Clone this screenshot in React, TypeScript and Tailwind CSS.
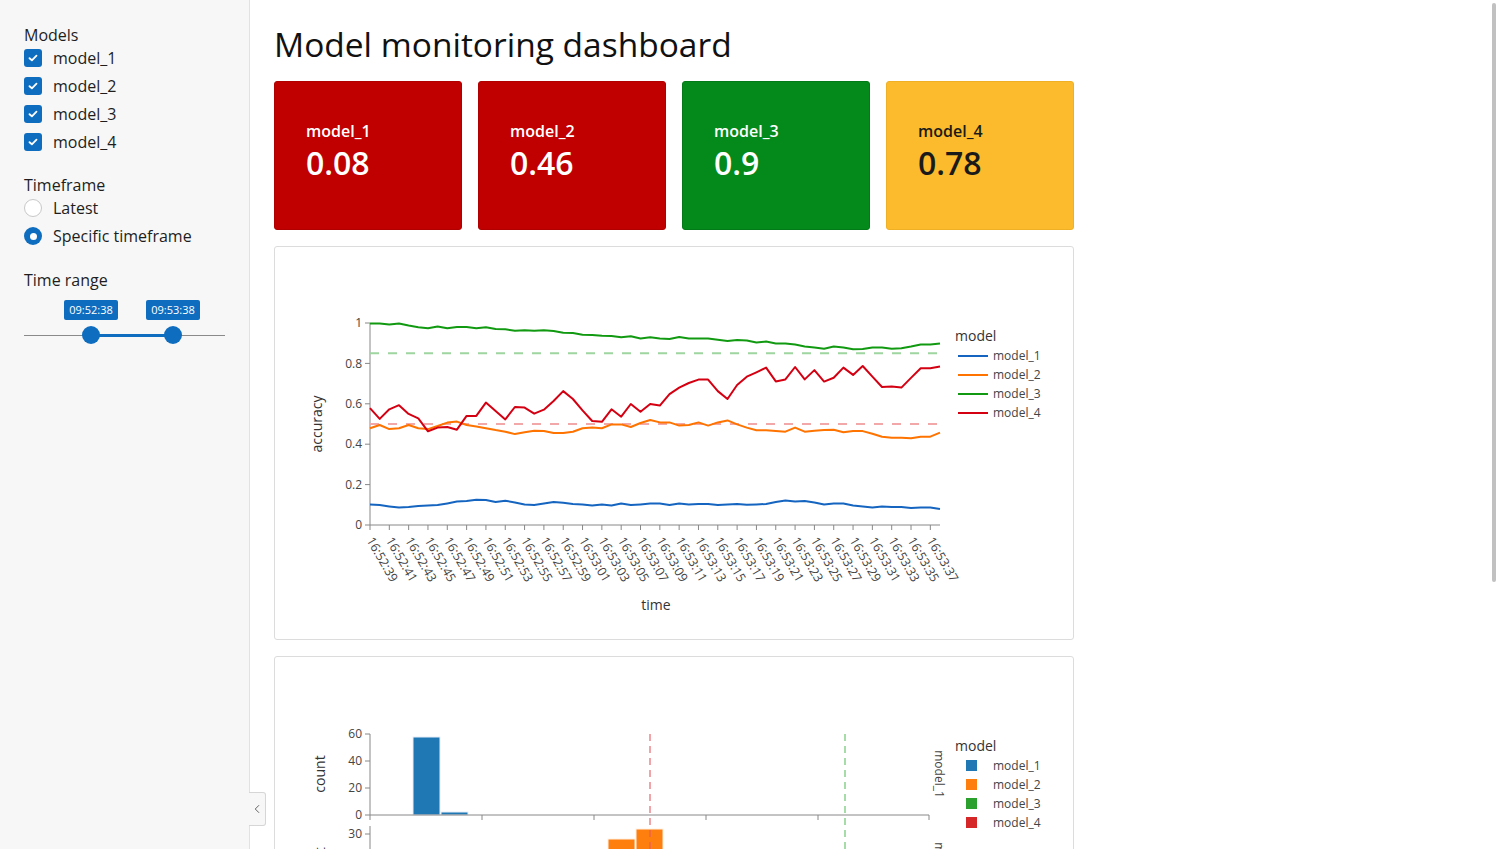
import { ChevronLeft } from 'lucide-react'

const blue = [
  0.102, 0.099, 0.092, 0.086, 0.089, 0.094, 0.096, 0.099, 0.107, 0.116, 0.119, 0.125, 0.124, 0.114, 0.12, 0.112, 0.102, 0.099, 0.107, 0.114,
  0.11, 0.104, 0.102, 0.096, 0.102, 0.096, 0.106, 0.099, 0.102, 0.106, 0.106, 0.099, 0.107, 0.102, 0.104, 0.104, 0.099, 0.102, 0.104, 0.1,
  0.102, 0.104, 0.114, 0.122, 0.117, 0.119, 0.112, 0.102, 0.107, 0.107, 0.097, 0.092, 0.087, 0.092, 0.089, 0.089, 0.084, 0.087, 0.087, 0.079,
]
const orange = [
  0.479, 0.495, 0.475, 0.479, 0.495, 0.479, 0.475, 0.49, 0.507, 0.512, 0.495, 0.487, 0.479, 0.47, 0.462, 0.45, 0.459, 0.467, 0.466, 0.455,
  0.455, 0.462, 0.479, 0.482, 0.479, 0.498, 0.498, 0.485, 0.505, 0.52, 0.508, 0.508, 0.492, 0.495, 0.508, 0.492, 0.508, 0.518, 0.498, 0.482,
  0.469, 0.469, 0.465, 0.462, 0.482, 0.462, 0.467, 0.47, 0.472, 0.459, 0.465, 0.465, 0.452, 0.437, 0.432, 0.432, 0.429, 0.437, 0.437, 0.457,
]
const green = [
  0.998, 0.998, 0.993, 0.997, 0.987, 0.979, 0.974, 0.983, 0.974, 0.98, 0.98, 0.974, 0.979, 0.97, 0.969, 0.962, 0.964, 0.962, 0.964, 0.96,
  0.952, 0.95, 0.942, 0.941, 0.937, 0.936, 0.929, 0.934, 0.924, 0.929, 0.924, 0.921, 0.931, 0.924, 0.924, 0.924, 0.917, 0.911, 0.916, 0.914,
  0.904, 0.908, 0.899, 0.899, 0.893, 0.884, 0.879, 0.873, 0.883, 0.878, 0.87, 0.871, 0.879, 0.879, 0.873, 0.875, 0.883, 0.893, 0.893, 0.898,
]
const red = [
  0.578, 0.525, 0.573, 0.593, 0.55, 0.528, 0.464, 0.482, 0.485, 0.472, 0.54, 0.54, 0.606, 0.564, 0.523, 0.584, 0.581, 0.551, 0.571, 0.614,
  0.663, 0.624, 0.568, 0.515, 0.511, 0.573, 0.536, 0.599, 0.561, 0.599, 0.591, 0.648, 0.68, 0.703, 0.72, 0.72, 0.663, 0.624, 0.693, 0.734,
  0.756, 0.779, 0.711, 0.721, 0.782, 0.721, 0.767, 0.71, 0.729, 0.779, 0.743, 0.787, 0.734, 0.683, 0.686, 0.68, 0.728, 0.776, 0.776, 0.784,
]

const series = [
  { name: 'model_1', color: '#1565c0', data: blue },
  { name: 'model_2', color: '#ff7300', data: orange },
  { name: 'model_3', color: '#119a11', data: green },
  { name: 'model_4', color: '#d40012', data: red },
]

const histColors = ['#1f77b4', '#ff7f0e', '#2ca02c', '#d62728']

const step = 570 / 59
const px = (i: number) => 370 + i * step
const py = (v: number) => 525 - v * 202

const tickLabels = Array.from({ length: 30 }, (_, k) => {
  const s = 39 + 2 * k
  const m = 52 + Math.floor(s / 60)
  return `16:${m}:${String(s % 60).padStart(2, '0')}`
})

const models = ['model_1', 'model_2', 'model_3', 'model_4']

const scores = [
  { name: 'model_1', value: '0.08', cls: 'bg-[#c00000] border-[#b00000] text-white' },
  { name: 'model_2', value: '0.46', cls: 'bg-[#c00000] border-[#b00000] text-white' },
  { name: 'model_3', value: '0.9', cls: 'bg-[#038a1b] border-[#027a17] text-white' },
  { name: 'model_4', value: '0.78', cls: 'bg-[#fbbb2c] border-[#efb025] text-[#1a1a1a]' },
]

const Checkbox = () => (
  <span className="flex h-[18px] w-[18px] items-center justify-center rounded-[3px] bg-[#0f6dbf]">
    <svg width="10" height="8" viewBox="0 0 10 8">
      <path d="M1.5 4.2 L3.9 6.3 L8.5 1.6" fill="none" stroke="#fff" strokeWidth="1.8" strokeLinecap="round" strokeLinejoin="round" />
    </svg>
  </span>
)

const Radio = ({ checked }: { checked?: boolean }) =>
  checked ? (
    <span className="flex h-[18px] w-[18px] items-center justify-center rounded-full bg-[#0f6dbf]">
      <span className="h-[7px] w-[7px] rounded-full bg-white" />
    </span>
  ) : (
    <span className="h-[18px] w-[18px] rounded-full border border-[#c8c8c8] bg-white" />
  )

const Sidebar = () => (
  <aside className="relative w-[250px] shrink-0 border-r border-[#e2e2e2] bg-[#f7f7f7] pl-6 pt-[27px] text-[16px] text-[#1e1e1e]">
    <div className="leading-[17px]">Models</div>
    {models.map((m) => (
      <label key={`cb-${m}`} className="flex h-7 items-center gap-[11px]">
        <Checkbox />
        <span>{m}</span>
      </label>
    ))}

    <div className="mt-5 leading-[18px]">Timeframe</div>
    <label className="flex h-7 items-center gap-[11px]">
      <Radio />
      <span>Latest</span>
    </label>
    <label className="flex h-7 items-center gap-[11px]">
      <Radio checked />
      <span>Specific timeframe</span>
    </label>

    <div className="mt-5 leading-[20px]">Time range</div>

    {/* range slider */}
    <div className="relative mt-[10px] h-[46px] w-[201px]">
      <div className="absolute left-0 right-0 top-[35px] h-px bg-[#8a8a8a]" />
      <div className="absolute left-[67px] top-[34px] h-[3px] w-[82px] bg-[#0f6dbf]" />
      <div className="absolute left-[58px] top-[26px] h-[18px] w-[18px] rounded-full bg-[#0f6dbf]" />
      <div className="absolute left-[140px] top-[26px] h-[18px] w-[18px] rounded-full bg-[#0f6dbf]" />
      <div className="absolute left-[40px] top-0 flex h-5 w-[54px] items-center justify-center rounded-[2px] bg-[#0f6dbf] text-[11px] text-white">
        09:52:38
      </div>
      <div className="absolute left-[122px] top-0 flex h-5 w-[54px] items-center justify-center rounded-[2px] bg-[#0f6dbf] text-[11px] text-white">
        09:53:38
      </div>
    </div>

    {/* collapse tab */}
    <button className="absolute left-full top-[792px] flex h-[34px] w-[17px] items-center justify-center rounded-r-[3px] border border-l-0 border-[#d6d6d6] bg-[#f7f7f7] text-[#333]">
      <ChevronLeft size={14} strokeWidth={1.3} />
    </button>
  </aside>
)

const LineChart = () => (
  <svg width="798" height="392" className="block" fontFamily="'Open Sans', sans-serif">
    <g transform="translate(-275 -247)">
      {/* y axis */}
      <line x1="370" y1="323" x2="370" y2="525" stroke="#888" />
      {[0, 0.2, 0.4, 0.6, 0.8, 1].map((v) => (
        <g key={`yt-${v}`}>
          <line x1="365" y1={py(v)} x2="370" y2={py(v)} stroke="#888" />
          <text x="362" y={py(v)} dy="0.35em" textAnchor="end" fontSize="12" fill="#444">
            {v}
          </text>
        </g>
      ))}
      <text transform="translate(322 424) rotate(-90)" textAnchor="middle" fontSize="14" fill="#333">
        accuracy
      </text>

      {/* x axis */}
      <line x1="370" y1="525" x2="940" y2="525" stroke="#888" />
      {tickLabels.map((t, k) => {
        const x = px(2 * k)
        return (
          <g key={`xt-${t}`}>
            <line x1={x} y1="525" x2={x} y2="530" stroke="#888" />
            <text transform={`translate(${x} 538) rotate(60)`} dy="0.35em" fontSize="12.5" fill="#444">
              {t}
            </text>
          </g>
        )
      })}
      <text x="656" y="610" textAnchor="middle" fontSize="14" fill="#333">
        time
      </text>

      {/* thresholds */}
      <line x1="370" y1={py(0.85)} x2="940" y2={py(0.85)} stroke="#9fd5a1" strokeWidth="2" strokeDasharray="9 9" />
      <line x1="370" y1={py(0.5)} x2="940" y2={py(0.5)} stroke="#f2a7a9" strokeWidth="2" strokeDasharray="9 9" />

      {series.map((s) => (
        <polyline
          key={`line-${s.name}`}
          points={s.data.map((v, i) => `${px(i).toFixed(1)},${py(v).toFixed(1)}`).join(' ')}
          fill="none"
          stroke={s.color}
          strokeWidth="2"
          strokeLinejoin="round"
        />
      ))}

      {/* legend */}
      <text x="955" y="341" fontSize="14" fill="#333">
        model
      </text>
      {series.map((s, i) => (
        <g key={`lg-${s.name}`}>
          <line x1="958" y1={356 + i * 19} x2="988" y2={356 + i * 19} stroke={s.color} strokeWidth="2" />
          <text x="993" y={356 + i * 19} dy="0.35em" fontSize="12" fill="#444">
            {s.name}
          </text>
        </g>
      ))}
    </g>
  </svg>
)

const HistChart = () => (
  <svg width="798" height="392" className="block" fontFamily="'Open Sans', sans-serif">
    <g transform="translate(-275 -657)">
      {/* facet 1 */}
      <line x1="370" y1="734" x2="370" y2="815" stroke="#888" />
      {[0, 20, 40, 60].map((v) => (
        <g key={`h1-${v}`}>
          <line x1="365" y1={815 - v * 1.35} x2="370" y2={815 - v * 1.35} stroke="#888" />
          <text x="362" y={815 - v * 1.35} dy="0.35em" textAnchor="end" fontSize="12" fill="#444">
            {v}
          </text>
        </g>
      ))}
      <text transform="translate(325 774) rotate(-90)" textAnchor="middle" fontSize="14" fill="#333">
        count
      </text>
      <rect x="413" y="737" width="27" height="78" fill="#1f77b4" stroke="#e8f0f7" strokeWidth="1" />
      <rect x="441" y="812" width="27" height="3" fill="#1f77b4" stroke="#e8f0f7" strokeWidth="1" />
      <line x1="370" y1="815" x2="929" y2="815" stroke="#888" />
      {[370, 482, 594, 706, 818, 929].map((x) => (
        <line key={`hx-${x}`} x1={x} y1="815" x2={x} y2="820" stroke="#888" />
      ))}
      <text transform="translate(935 774) rotate(90)" textAnchor="middle" fontSize="12" fill="#444">
        model_1
      </text>

      {/* facet 2 */}
      <line x1="370" y1="826" x2="370" y2="907" stroke="#888" />
      <line x1="365" y1="834" x2="370" y2="834" stroke="#888" />
      <text x="362" y="834" dy="0.35em" textAnchor="end" fontSize="12" fill="#444">
        30
      </text>
      <text transform="translate(325 866) rotate(-90)" textAnchor="middle" fontSize="14" fill="#333">
        count
      </text>
      <rect x="608" y="839" width="27" height="68" fill="#ff7f0e" stroke="#fff1e4" strokeWidth="1" />
      <rect x="636" y="829" width="27" height="78" fill="#ff7f0e" stroke="#fff1e4" strokeWidth="1" />
      <text transform="translate(935 866) rotate(90)" textAnchor="middle" fontSize="12" fill="#444">
        model_2
      </text>

      {/* thresholds */}
      <line x1="650" y1="734" x2="650" y2="910" stroke="#e45a5f" strokeOpacity="0.55" strokeWidth="2" strokeDasharray="7 5" />
      <line x1="845" y1="734" x2="845" y2="910" stroke="#5cbf60" strokeOpacity="0.55" strokeWidth="2" strokeDasharray="7 5" />

      {/* legend */}
      <text x="955" y="751" fontSize="14" fill="#333">
        model
      </text>
      {models.map((m, i) => (
        <g key={`hl-${m}`}>
          <rect x="966" y={760 + i * 19} width="11" height="11" fill={histColors[i]} />
          <text x="993" y={766 + i * 19} dy="0.35em" fontSize="12" fill="#444">
            {m}
          </text>
        </g>
      ))}
    </g>
  </svg>
)

export default function App() {
  return (
    <div className="relative flex h-[849px] w-full overflow-hidden bg-white font-['Open_Sans',sans-serif]">
      <Sidebar />

      <main className="flex-1 pl-6 pt-[24px]">
        <h1 className="mb-[17px] text-[33.5px] leading-10 text-[#111]">Model monitoring dashboard</h1>

        <div className="flex gap-4">
          {scores.map((s) => (
            <div key={`score-${s.name}`} className={`h-[149px] w-[188px] rounded-[3px] border pl-[31px] pt-[37px] ${s.cls}`}>
              <div className="text-[16px] font-semibold leading-6">{s.name}</div>
              <div className="text-[32px] font-semibold leading-10">{s.value}</div>
            </div>
          ))}
        </div>

        <div className="mt-4 h-[394px] w-[800px] rounded-[3px] border border-[#dcdcdc]">
          <LineChart />
        </div>

        <div className="mt-4 h-[394px] w-[800px] rounded-[3px] border border-[#dcdcdc]">
          <HistChart />
        </div>
      </main>

      {/* overlay scrollbar */}
      <div className="absolute right-[4px] top-[3px] h-[579px] w-[4px] rounded-full bg-[#c1c1c1]" />
    </div>
  )
}
